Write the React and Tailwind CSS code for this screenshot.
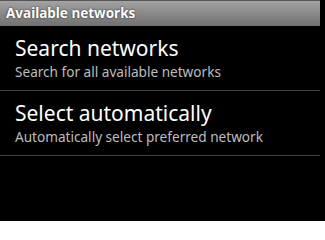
export default function App() {
  const items = [
    { t: "Search networks", s: "Search for all available networks" },
    { t: "Select automatically", s: "Automatically select preferred network" },
  ];
  return (
    <div className="w-[325px] h-[221px] bg-black overflow-hidden" style={{ fontFamily: '"Noto Sans", "Open Sans", sans-serif' }}>
      <div className="w-[320px]">
        <div className="h-[26px] border-t border-[#555] bg-gradient-to-b from-[#a2a2a2] to-[#717171] flex items-center pl-[6px]">
          <span className="text-white font-bold text-[13.5px] leading-none [text-shadow:0_0_2px_rgba(0,0,0,0.8)]">Available networks</span>
        </div>
        {items.map((it, i) => (
          <div key={i}>
            <div className="h-[64px] flex flex-col justify-center pl-[15px]">
              <div className="text-white text-[21px] leading-[24px] mt-[1px]">{it.t}</div>
              <div className="text-[#bdbdbd] text-[13.6px] leading-[18px] mt-[3px]">{it.s}</div>
            </div>
            <div className="h-px bg-[#444]" />
          </div>
        ))}
      </div>
    </div>
  );
}
